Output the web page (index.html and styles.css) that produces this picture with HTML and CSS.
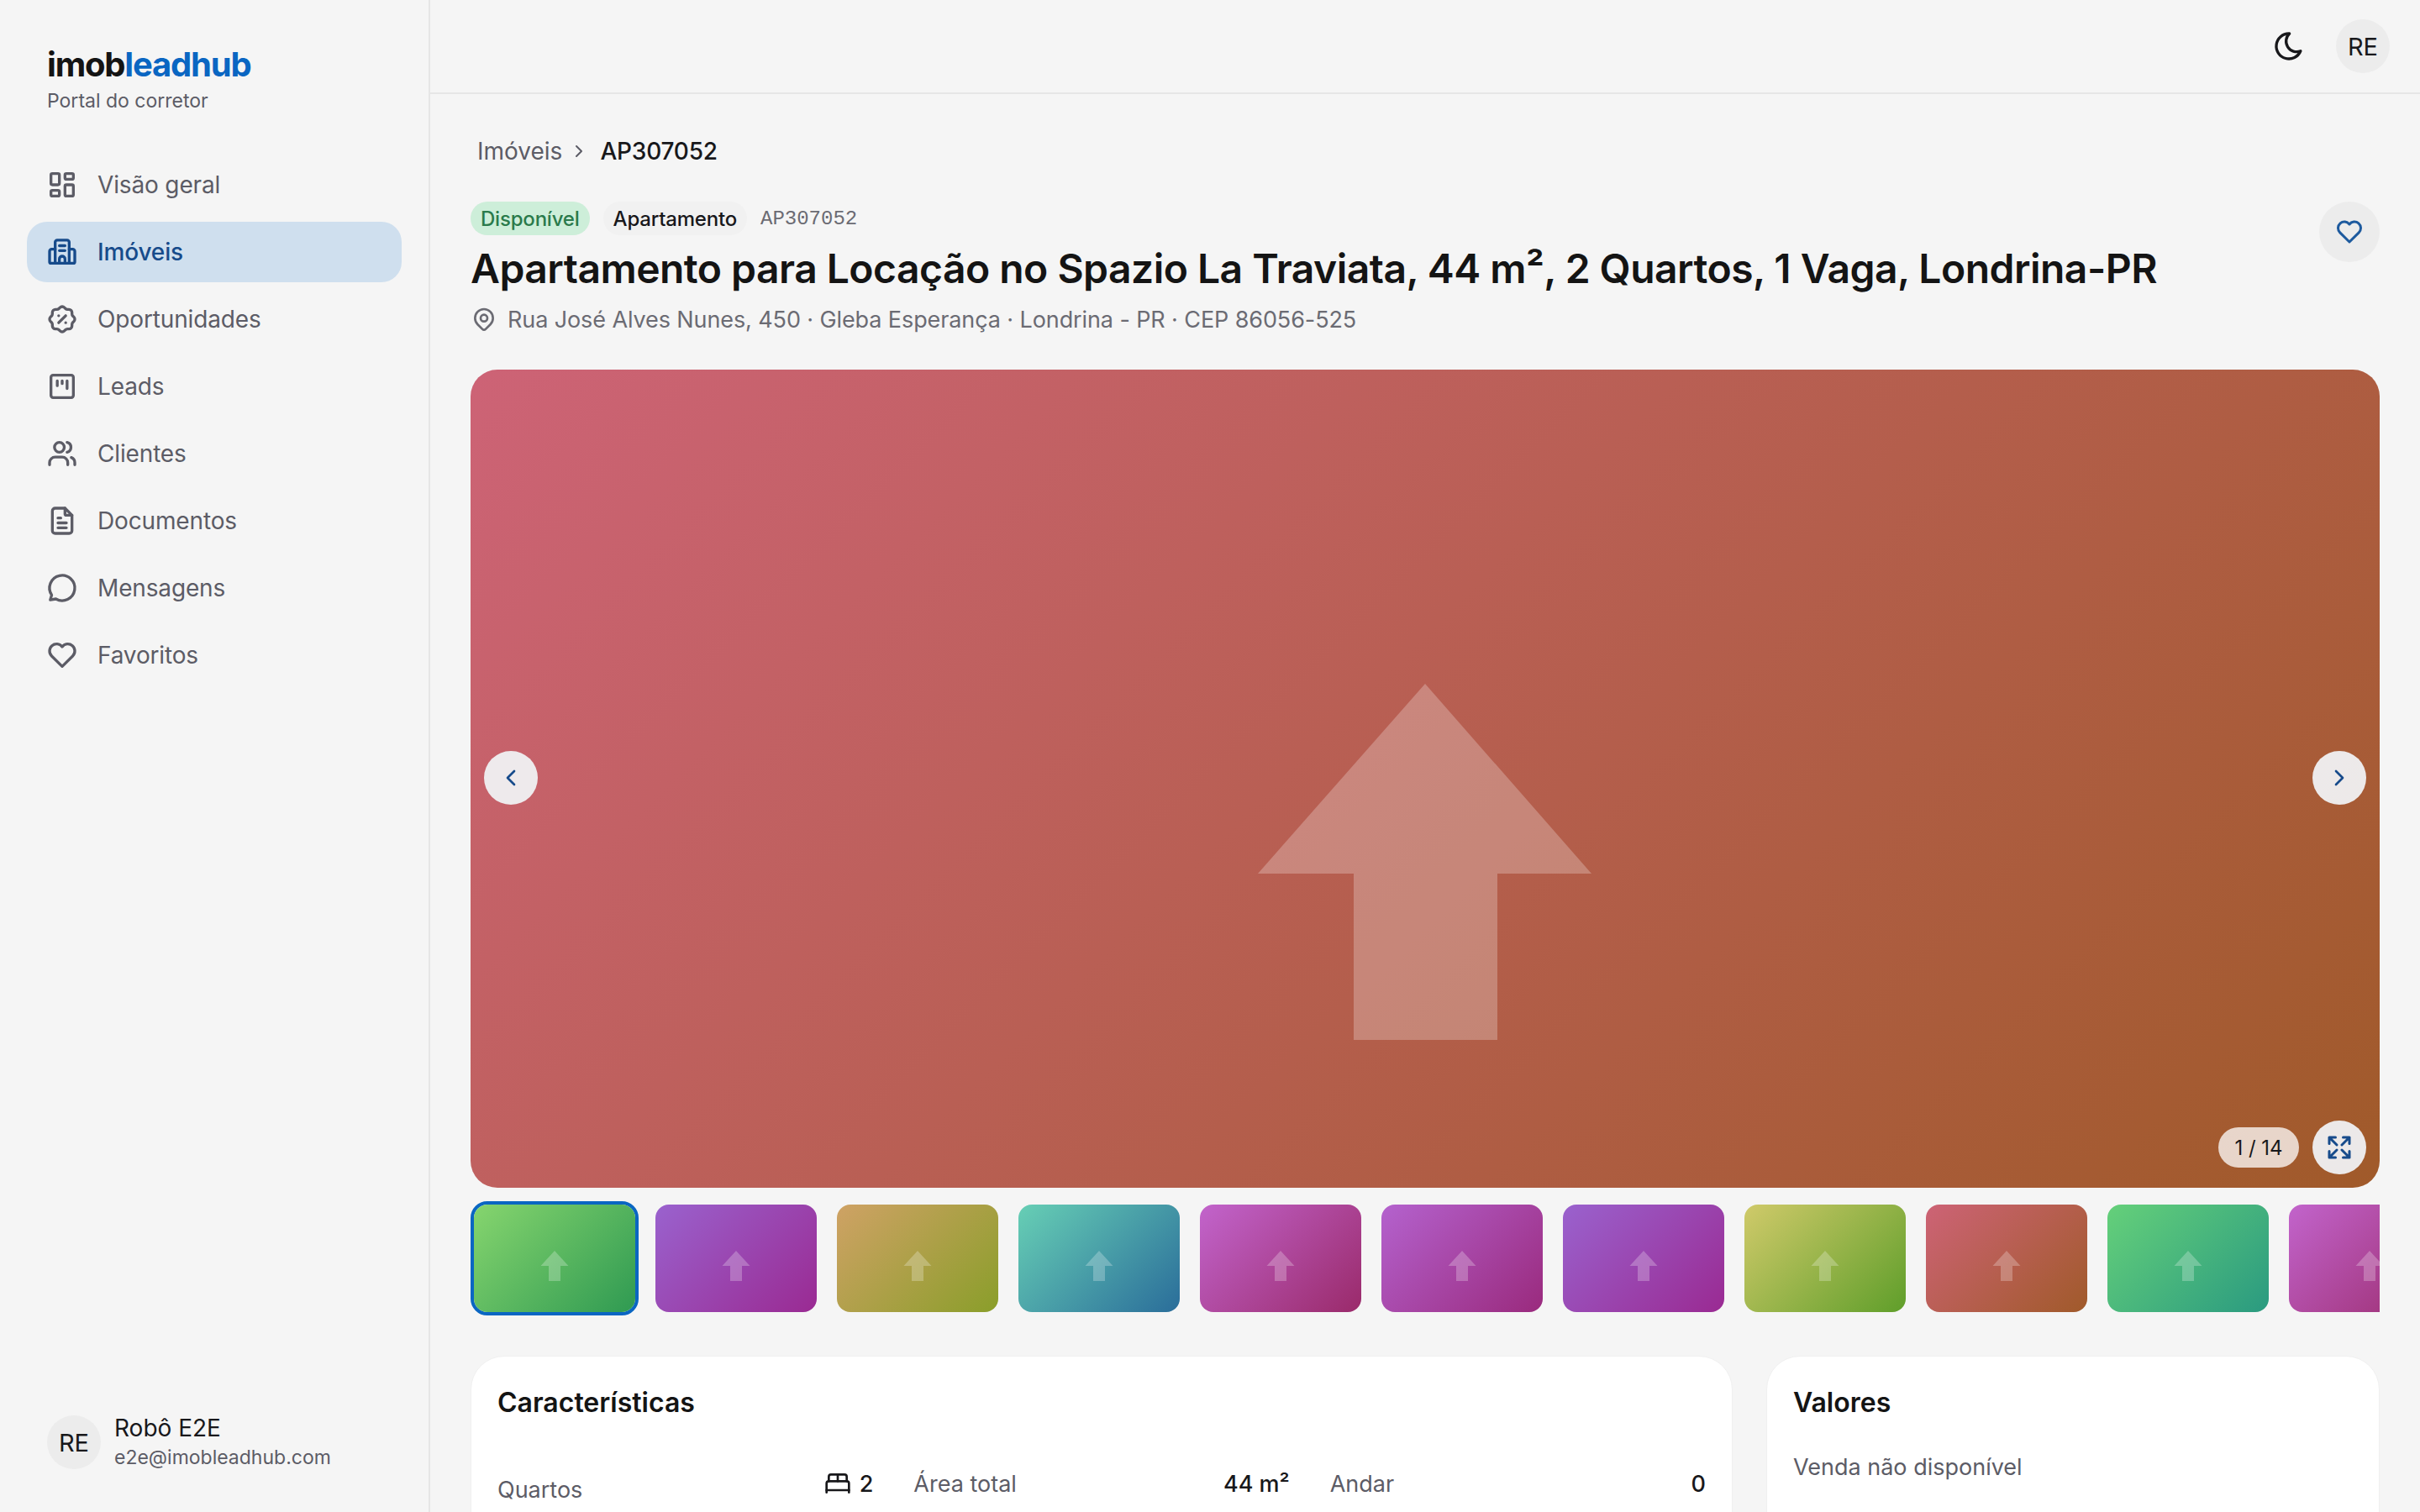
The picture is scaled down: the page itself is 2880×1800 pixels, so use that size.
FILE: index.html
```html
<!DOCTYPE html>
<html lang="pt-br">
<head>
    <meta charset="UTF-8">
    <meta name="viewport" content="width=device-width, initial-scale=1.0">
    <title>Apartamento para Locação - imobleadhub</title>
    <link rel="stylesheet" href="styles.css">
</head>
<body>

    <!-- Barra lateral -->
    <aside class="sidebar">
        <div class="brand">
            <div class="brand-name">imob<span class="brand-accent">leadhub</span></div>
            <div class="brand-sub">Portal do corretor</div>
        </div>

        <nav class="nav">
            <a class="nav-item">
                <svg class="icon" viewBox="0 0 24 24"><path d="M5 4h4a1 1 0 0 1 1 1v6a1 1 0 0 1-1 1H5a1 1 0 0 1-1-1V5a1 1 0 0 1 1-1"/><path d="M5 16h4a1 1 0 0 1 1 1v2a1 1 0 0 1-1 1H5a1 1 0 0 1-1-1v-2a1 1 0 0 1 1-1"/><path d="M15 12h4a1 1 0 0 1 1 1v6a1 1 0 0 1-1 1h-4a1 1 0 0 1-1-1v-6a1 1 0 0 1 1-1"/><path d="M15 4h4a1 1 0 0 1 1 1v2a1 1 0 0 1-1 1h-4a1 1 0 0 1-1-1V5a1 1 0 0 1 1-1"/></svg>
                Visão geral
            </a>
            <a class="nav-item active">
                <svg class="icon" viewBox="0 0 24 24"><path d="M7 20V5a1.5 1.5 0 0 1 1.5-1.5h7A1.5 1.5 0 0 1 17 5v15"/><path d="M7 10H4.5A1.5 1.5 0 0 0 3 11.5V19a1 1 0 0 0 1 1h16a1 1 0 0 0 1-1v-7.5a1.5 1.5 0 0 0-1.5-1.5H17"/><path d="M10 7.5h4M10 11h4"/><path d="M10 20v-3a2 2 0 0 1 4 0v3"/></svg>
                Imóveis
            </a>
            <a class="nav-item">
                <svg class="icon" viewBox="0 0 24 24"><path d="M5 7.2A2.2 2.2 0 0 1 7.2 5h1a2.2 2.2 0 0 0 1.55-.64l.7-.7a2.2 2.2 0 0 1 3.12 0l.7.7c.41.41.97.64 1.55.64h1A2.2 2.2 0 0 1 19 7.2v1c0 .58.23 1.14.64 1.55l.7.7a2.2 2.2 0 0 1 0 3.12l-.7.7a2.2 2.2 0 0 0-.64 1.55v1a2.2 2.2 0 0 1-2.2 2.2h-1a2.2 2.2 0 0 0-1.55.64l-.7.7a2.2 2.2 0 0 1-3.12 0l-.7-.7A2.2 2.2 0 0 0 8.2 19h-1A2.2 2.2 0 0 1 5 16.8v-1a2.2 2.2 0 0 0-.64-1.55l-.7-.7a2.2 2.2 0 0 1 0-3.12l.7-.7A2.2 2.2 0 0 0 5 8.2z"/><path d="M9.5 14.5l5-5"/><path d="M9.5 9.5h.01M14.5 14.5h.01"/></svg>
                Oportunidades
            </a>
            <a class="nav-item">
                <svg class="icon" viewBox="0 0 24 24"><rect x="4" y="4" width="16" height="16" rx="1.5"/><path d="M8.5 8v3.5M12 8v2M15.5 8v5.5"/></svg>
                Leads
            </a>
            <a class="nav-item">
                <svg class="icon" viewBox="0 0 24 24"><circle cx="10" cy="7.5" r="3.5"/><path d="M3 20v-1.5a4 4 0 0 1 4-4h5a4 4 0 0 1 4 4V20"/><path d="M15.5 4a3.6 3.6 0 0 1 0 7"/><path d="M21 20v-1.5a4 4 0 0 0-2.5-3.7"/></svg>
                Clientes
            </a>
            <a class="nav-item">
                <svg class="icon" viewBox="0 0 24 24"><path d="M14 3v4a1 1 0 0 0 1 1h4"/><path d="M17 21H7a2 2 0 0 1-2-2V5a2 2 0 0 1 2-2h7l5 5v11a2 2 0 0 1-2 2z"/><path d="M9 10h2M9 13.5h6M9 17h6"/></svg>
                Documentos
            </a>
            <a class="nav-item">
                <svg class="icon" viewBox="0 0 24 24"><path d="M3.5 20.5l1-3.5A9 9 0 1 1 7.5 19.8z"/></svg>
                Mensagens
            </a>
            <a class="nav-item">
                <svg class="icon" viewBox="0 0 24 24"><path d="M19.5 12.57L12 20l-7.5-7.43A5 5 0 1 1 12 6a5 5 0 1 1 7.5 6.57"/></svg>
                Favoritos
            </a>
        </nav>

        <div class="sidebar-user">
            <div class="avatar">RE</div>
            <div>
                <div class="user-name">Robô E2E</div>
                <div class="user-mail">e2e@imobleadhub.com</div>
            </div>
        </div>
    </aside>

    <div class="page">
        <!-- Topo -->
        <header class="topbar">
            <svg class="icon icon-moon" viewBox="0 0 24 24"><path d="M12 3h.39a7.5 7.5 0 0 0 7.92 12.45A9 9 0 1 1 12 3z"/></svg>
            <div class="avatar">RE</div>
        </header>

        <main class="content">
            <div class="breadcrumb">
                <span class="crumb-link">Imóveis</span>
                <svg class="icon icon-crumb" viewBox="0 0 24 24"><path d="M9 6l6 6-6 6"/></svg>
                <span class="crumb-current">AP307052</span>
            </div>

            <section class="property-head">
                <div class="property-info">
                    <div class="chips">
                        <span class="chip chip-green">Disponível</span>
                        <span class="chip chip-gray">Apartamento</span>
                        <span class="code">AP307052</span>
                    </div>
                    <h1>Apartamento para Locação no Spazio La Traviata, 44 m², 2 Quartos, 1 Vaga, Londrina-PR</h1>
                    <div class="address">
                        <svg class="icon icon-pin" viewBox="0 0 24 24"><path d="M9 11a3 3 0 1 0 6 0 3 3 0 0 0-6 0"/><path d="M17.66 16.66l-4.24 4.24a2 2 0 0 1-2.83 0l-4.25-4.24a8 8 0 1 1 11.32 0z"/></svg>
                        Rua José Alves Nunes, 450 · Gleba Esperança · Londrina - PR · CEP 86056-525
                    </div>
                </div>
                <button class="fav-btn">
                    <svg class="icon icon-heart" viewBox="0 0 24 24"><path d="M19.5 12.57L12 20l-7.5-7.43A5 5 0 1 1 12 6a5 5 0 1 1 7.5 6.57"/></svg>
                </button>
            </section>

            <!-- Galeria -->
            <section class="gallery grad-rose">
                <svg class="gallery-arrow" viewBox="0 0 2272 974"><polygon points="1136,374 1334,600 1222,600 1222,798 1051,798 1051,600 937,600"/></svg>
                <button class="round-btn gallery-prev">
                    <svg class="icon icon-small" viewBox="0 0 24 24"><path d="M15 6l-6 6 6 6"/></svg>
                </button>
                <button class="round-btn gallery-next">
                    <svg class="icon icon-small" viewBox="0 0 24 24"><path d="M9 6l6 6-6 6"/></svg>
                </button>
                <span class="gallery-count">1 / 14</span>
                <button class="round-btn gallery-expand">
                    <svg class="icon icon-expand" viewBox="0 0 24 24"><path d="M10 10L4 4M4 9V4h5"/><path d="M14 10l6-6M15 4h5v5"/><path d="M10 14l-6 6M4 15v5h5"/><path d="M14 14l6 6M20 15v5h-5"/></svg>
                </button>
            </section>

            <div class="thumbs">
                <div class="thumb active"><div class="thumb-img grad-green"><svg viewBox="0 0 192 128"><polygon points="96,55 112.5,73 103,73 103,91 89,91 89,73 79.5,73"/></svg></div></div>
                <div class="thumb"><div class="thumb-img grad-purple"><svg viewBox="0 0 192 128"><polygon points="96,55 112.5,73 103,73 103,91 89,91 89,73 79.5,73"/></svg></div></div>
                <div class="thumb"><div class="thumb-img grad-tan"><svg viewBox="0 0 192 128"><polygon points="96,55 112.5,73 103,73 103,91 89,91 89,73 79.5,73"/></svg></div></div>
                <div class="thumb"><div class="thumb-img grad-teal"><svg viewBox="0 0 192 128"><polygon points="96,55 112.5,73 103,73 103,91 89,91 89,73 79.5,73"/></svg></div></div>
                <div class="thumb"><div class="thumb-img grad-magenta"><svg viewBox="0 0 192 128"><polygon points="96,55 112.5,73 103,73 103,91 89,91 89,73 79.5,73"/></svg></div></div>
                <div class="thumb"><div class="thumb-img grad-orchid"><svg viewBox="0 0 192 128"><polygon points="96,55 112.5,73 103,73 103,91 89,91 89,73 79.5,73"/></svg></div></div>
                <div class="thumb"><div class="thumb-img grad-purple"><svg viewBox="0 0 192 128"><polygon points="96,55 112.5,73 103,73 103,91 89,91 89,73 79.5,73"/></svg></div></div>
                <div class="thumb"><div class="thumb-img grad-lime"><svg viewBox="0 0 192 128"><polygon points="96,55 112.5,73 103,73 103,91 89,91 89,73 79.5,73"/></svg></div></div>
                <div class="thumb"><div class="thumb-img grad-rose"><svg viewBox="0 0 192 128"><polygon points="96,55 112.5,73 103,73 103,91 89,91 89,73 79.5,73"/></svg></div></div>
                <div class="thumb"><div class="thumb-img grad-emerald"><svg viewBox="0 0 192 128"><polygon points="96,55 112.5,73 103,73 103,91 89,91 89,73 79.5,73"/></svg></div></div>
                <div class="thumb"><div class="thumb-img grad-magenta"><svg viewBox="0 0 192 128"><polygon points="96,55 112.5,73 103,73 103,91 89,91 89,73 79.5,73"/></svg></div></div>
            </div>

            <!-- Cartões -->
            <div class="cards">
                <section class="card">
                    <h2>Características</h2>
                    <div class="features">
                        <div class="feature">
                            <span class="feature-label feature-label-low">Quartos</span>
                            <span class="feature-value">
                                <svg class="icon icon-bed" viewBox="0 0 24 24"><path d="M2 20v-8a2 2 0 0 1 2-2h16a2 2 0 0 1 2 2v8"/><path d="M4 10V6a2 2 0 0 1 2-2h12a2 2 0 0 1 2 2v4"/><path d="M12 4v6"/><path d="M2 18h20"/></svg>
                                2
                            </span>
                        </div>
                        <div class="feature">
                            <span class="feature-label">Área total</span>
                            <span class="feature-value">44 m²</span>
                        </div>
                        <div class="feature">
                            <span class="feature-label">Andar</span>
                            <span class="feature-value">0</span>
                        </div>
                    </div>
                </section>
                <section class="card">
                    <h2>Valores</h2>
                    <p class="card-note">Venda não disponível</p>
                </section>
            </div>
        </main>
    </div>

</body>
</html>
```

FILE: styles.css
```css
/* Geral */
* {
    box-sizing: border-box;
}

body {
    margin: 0;
    height: 100vh;
    overflow: hidden;
    display: flex;
    background-color: #f5f5f5;
    color: #18181b;
    font-family: Inter, "Liberation Sans", sans-serif;
}

.icon {
    width: 40px;
    height: 40px;
    flex-shrink: 0;
    fill: none;
    stroke: currentColor;
    stroke-width: 2;
    stroke-linecap: round;
    stroke-linejoin: round;
}

.avatar {
    width: 64px;
    height: 64px;
    border-radius: 50%;
    background-color: #ececec;
    color: #18181b;
    display: flex;
    align-items: center;
    justify-content: center;
    flex-shrink: 0;
    font-size: 29px;
    font-weight: 400;
}

/* Barra lateral */
.sidebar {
    width: 512px;
    flex-shrink: 0;
    height: 100%;
    border-right: 2px solid #e6e6e6;
    padding: 0 32px;
    display: flex;
    flex-direction: column;
}

.brand {
    padding: 53px 24px 0;
    height: 144px;
}

.brand-name {
    font-size: 40px;
    line-height: 48px;
    font-weight: 700;
    letter-spacing: -1.2px;
    color: #141414;
}

.brand-accent {
    color: #0a66c2;
}

.brand-sub {
    font-size: 23px;
    line-height: 38px;
    color: #5c5c66;
}

.nav {
    margin-top: 40px;
    display: flex;
    flex-direction: column;
    gap: 8px;
}

.nav-item {
    height: 72px;
    padding: 0 22px;
    border-radius: 24px;
    display: flex;
    align-items: center;
    gap: 22px;
    font-size: 28px;
    font-weight: 400;
    letter-spacing: -0.15px;
    color: #5c5c66;
}

.nav-item.active {
    background-color: #cfdfee;
    color: #174b8b;
    font-weight: 500;
}

.sidebar-user {
    margin-top: auto;
    padding: 0 24px 48px;
    display: flex;
    align-items: center;
    gap: 16px;
}

.user-name {
    font-size: 28px;
    line-height: 36px;
    color: #18181b;
}

.user-mail {
    font-size: 23px;
    line-height: 34px;
    color: #5c5c66;
}

/* Conteúdo */
.page {
    flex: 1;
    min-width: 0;
    height: 100%;
    display: flex;
    flex-direction: column;
    overflow: hidden;
}

.topbar {
    height: 112px;
    flex-shrink: 0;
    border-bottom: 2px solid #e6e6e6;
    padding: 0 36px 0 0;
    display: flex;
    align-items: center;
    justify-content: flex-end;
    gap: 36px;
}

.icon-moon {
    width: 40px;
    height: 40px;
    color: #18181b;
}

.content {
    padding: 48px 48px 0;
}

.breadcrumb {
    height: 40px;
    padding-left: 8px;
    display: flex;
    align-items: center;
    gap: 8px;
    font-size: 28px;
}

.crumb-link {
    color: #5c5c66;
}

.crumb-current {
    margin-left: 5px;
    color: #18181b;
    font-weight: 500;
    letter-spacing: -0.2px;
}

.icon-crumb {
    width: 24px;
    height: 24px;
    color: #5c5c66;
}

.property-head {
    margin-top: 40px;
    display: flex;
    justify-content: space-between;
    align-items: flex-start;
}

.chips {
    display: flex;
    align-items: center;
    gap: 16px;
    height: 40px;
}

.chip {
    height: 40px;
    padding: 0 12px;
    border-radius: 20px;
    display: flex;
    align-items: center;
    font-size: 24px;
    font-weight: 500;
    letter-spacing: -0.2px;
}

.chip-green {
    background-color: #cdeed9;
    color: #2a7a4b;
}

.chip-gray {
    background-color: #f1f1f1;
    color: #18181b;
}

.code {
    font-family: "Liberation Mono", "DejaVu Sans Mono", monospace;
    font-size: 24px;
    color: #6b6b73;
}

h1 {
    margin: 10px 0 0;
    font-size: 48px;
    line-height: 60px;
    font-weight: 600;
    letter-spacing: -0.52px;
    color: #141414;
}

.address {
    margin-top: 10px;
    height: 40px;
    display: flex;
    align-items: center;
    gap: 12px;
    font-size: 27px;
    letter-spacing: -0.1px;
    color: #6b6b73;
}

.icon-pin {
    width: 32px;
    height: 32px;
}

.fav-btn {
    width: 72px;
    height: 72px;
    border: none;
    border-radius: 50%;
    background-color: #ececec;
    color: #1d5a9e;
    display: flex;
    align-items: center;
    justify-content: center;
    padding: 0;
}

.icon-heart {
    width: 36px;
    height: 36px;
}

/* Galeria */
.gallery {
    position: relative;
    margin-top: 40px;
    height: 974px;
    border-radius: 32px;
    overflow: hidden;
}

.gallery-arrow {
    position: absolute;
    top: 0;
    left: 0;
    width: 100%;
    height: 100%;
    fill: rgba(255, 255, 255, 0.25);
}

.round-btn {
    position: absolute;
    width: 64px;
    height: 64px;
    border: none;
    padding: 0;
    border-radius: 50%;
    background-color: rgba(240, 241, 243, 0.95);
    color: #174b8b;
    display: flex;
    align-items: center;
    justify-content: center;
}

.icon-small {
    width: 32px;
    height: 32px;
}

.gallery-prev {
    left: 16px;
    top: 454px;
}

.gallery-next {
    right: 16px;
    top: 454px;
}

.gallery-expand {
    right: 16px;
    bottom: 16px;
}

.icon-expand {
    width: 36px;
    height: 36px;
}

.gallery-count {
    position: absolute;
    right: 96px;
    bottom: 24px;
    height: 48px;
    width: 96px;
    border-radius: 24px;
    background-color: rgba(255, 255, 255, 0.75);
    display: flex;
    align-items: center;
    justify-content: center;
    font-size: 24px;
    color: #18181b;
}

/* Miniaturas */
.thumbs {
    margin-top: 16px;
    display: flex;
    gap: 16px;
    overflow: hidden;
}

.thumb {
    width: 200px;
    height: 136px;
    flex-shrink: 0;
    border: 4px solid transparent;
    border-radius: 20px;
}

.thumb.active {
    border-color: #0a66c2;
}

.thumb-img {
    width: 100%;
    height: 100%;
    border-radius: 16px;
    overflow: hidden;
}

.thumb-img svg {
    display: block;
    width: 100%;
    height: 100%;
    fill: rgba(255, 255, 255, 0.25);
}

.grad-rose { background: linear-gradient(135deg, #cd6376, #a05a2a); }
.grad-green { background: linear-gradient(135deg, #86d56e, #2f9a52); }
.grad-purple { background: linear-gradient(135deg, #9a62ce, #9a2a92); }
.grad-tan { background: linear-gradient(135deg, #cfa265, #8a9e2a); }
.grad-teal { background: linear-gradient(135deg, #67cfb5, #2a6d9a); }
.grad-magenta { background: linear-gradient(135deg, #c264cc, #9a2a6a); }
.grad-orchid { background: linear-gradient(135deg, #b462ce, #9a2a7d); }
.grad-lime { background: linear-gradient(135deg, #d0ca6a, #5f9e2a); }
.grad-emerald { background: linear-gradient(135deg, #65d07a, #2a9a80); }

/* Cartões */
.cards {
    margin-top: 48px;
    display: grid;
    grid-template-columns: minmax(0, 1fr) 730px;
    gap: 40px;
}

.card {
    background-color: #fff;
    border: 1px solid #f0f0f0;
    border-radius: 40px;
    padding: 33px 31px 31px;
    height: 400px;
}

h2 {
    margin: 0;
    font-size: 32px;
    line-height: 44px;
    font-weight: 600;
    color: #141414;
}

.features {
    margin-top: 54px;
    display: grid;
    grid-template-columns: repeat(3, minmax(0, 1fr));
    gap: 48px;
}

.feature {
    display: flex;
    justify-content: space-between;
    align-items: center;
    height: 40px;
    font-size: 27px;
}

.feature-label {
    color: #5c5c66;
}

.feature-label-low {
    padding-top: 14px;
}

.feature-value {
    display: flex;
    align-items: center;
    gap: 10px;
    font-weight: 500;
    color: #18181b;
}

.icon-bed {
    width: 32px;
    height: 32px;
}

.card-note {
    margin: 35px 0 0;
    font-size: 27px;
    line-height: 40px;
    color: #5c5c66;
}
```
